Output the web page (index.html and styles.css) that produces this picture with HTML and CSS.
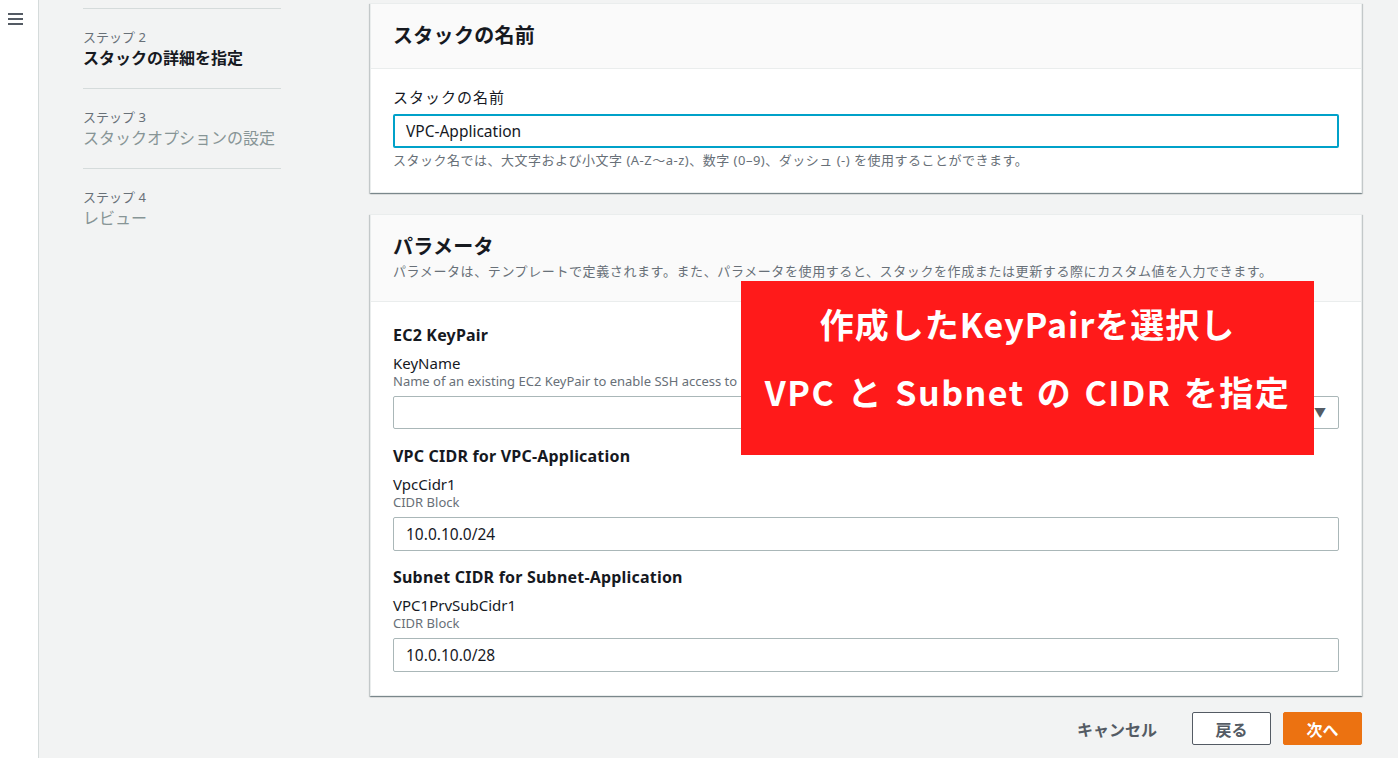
FILE: index.html
```html
<!DOCTYPE html>
<html lang="ja">
<head>
    <meta charset="UTF-8">
    <title>スタックの作成</title>
    <link rel="stylesheet" href="styles.css">
</head>
<body>
<div class="layout">
    <div class="side-bar">
        <svg class="menu-icon" width="16" height="14" viewBox="0 0 16 14"><rect x="0" y="1" width="15" height="2" fill="#545b64"/><rect x="0" y="6" width="15" height="2" fill="#545b64"/><rect x="0" y="11" width="15" height="2" fill="#545b64"/></svg>
    </div>
    <div class="main">
        <ul class="steps">
            <li><div class="step-no">ステップ 2</div><div class="step-name current">スタックの詳細を指定</div></li>
            <li><div class="step-no">ステップ 3</div><div class="step-name">スタックオプションの設定</div></li>
            <li><div class="step-no">ステップ 4</div><div class="step-name">レビュー</div></li>
        </ul>
        <div class="content">
            <div class="panel">
                <div class="panel-head">
                    <h2>スタックの名前</h2>
                </div>
                <div class="panel-body first">
                    <div class="label jp">スタックの名前</div>
                    <div class="input focus">VPC-Application</div>
                    <div class="hint">スタック名では、大文字および小文字 (A-Z～a-z)、数字 (0–9)、ダッシュ (-) を使用することができます。</div>
                </div>
            </div>
            <div class="panel params">
                <div class="panel-head tall">
                    <h2>パラメータ</h2>
                    <div class="desc">パラメータは、テンプレートで定義されます。また、パラメータを使用すると、スタックを作成または更新する際にカスタム値を入力できます。</div>
                </div>
                <div class="panel-body">
                    <h3>EC2 KeyPair</h3>
                    <div class="label">KeyName</div>
                    <div class="desc small">Name of an existing EC2 KeyPair to enable SSH access to</div>
                    <div class="input select"><span class="caret">&#9660;</span></div>
                    <h3>VPC CIDR for VPC-Application</h3>
                    <div class="label">VpcCidr1</div>
                    <div class="desc small">CIDR Block</div>
                    <div class="input">10.0.10.0/24</div>
                    <h3>Subnet CIDR for Subnet-Application</h3>
                    <div class="label">VPC1PrvSubCidr1</div>
                    <div class="desc small">CIDR Block</div>
                    <div class="input">10.0.10.0/28</div>
                </div>
                <div class="callout">
                    <p>作成したKeyPairを選択し</p>
                    <p class="wide">VPC と Subnet の CIDR を指定</p>
                </div>
            </div>
            <div class="actions">
                <span class="cancel">キャンセル</span>
                <button class="btn">戻る</button>
                <button class="btn primary">次へ</button>
            </div>
        </div>
    </div>
</div>
</body>
</html>
```
FILE: styles.css
```css
html, body { margin: 0; height: 100%; }
body { font-family: "Noto Sans", "Noto Sans CJK JP", sans-serif; color: #16191f; background: #f2f3f3; overflow: hidden; }
.layout { display: flex; height: 758px; }
.side-bar { width: 38px; background: #fff; border-right: 1px solid #d5dbdb; flex: none; }
.menu-icon { display: block; margin: 12px 0 0 8px; }
.main { flex: 1; display: flex; padding: 0 36px 0 44px; }

.steps { list-style: none; margin: 8px 0 0; padding: 0; width: 198px; flex: none; }
.steps li { border-top: 1px solid #d5dbdb; height: 80px; padding-top: 19px; box-sizing: border-box; }
.step-no { font-size: 13px; color: #687078; line-height: 18px; }
.step-name { font-size: 16px; color: #879596; line-height: 24px; }
.step-name.current { color: #16191f; font-weight: 700; }

.content { margin-left: 89px; flex: 1; padding-top: 3px; }
.panel { background: #fff; border: 1px solid #eaeded; box-shadow: 0 1px 1px 0 rgba(0,28,36,.3), 1px 1px 1px 0 rgba(0,28,36,.15), -1px 1px 1px 0 rgba(0,28,36,.15); position: relative; }
.panel-head { background: #fafafa; border-bottom: 1px solid #eaeded; height: 65px; box-sizing: border-box; padding: 18px 22px 0; }
.panel-head.tall { height: 87px; padding-top: 18px; }
.panel-head h2 { margin: 0; font-size: 20px; line-height: 28px; font-weight: 700; letter-spacing: 0.3px; }
.panel-head .desc { font-size: 13px; color: #687078; line-height: 20px; letter-spacing: 0.6px; }
.panel-body { padding: 22px 22px 23px; }
.panel-body.first { padding-top: 18px; padding-bottom: 24px; }
.panel-body h3 { margin: 0 0 7px; font-size: 16px; line-height: 22px; font-weight: 700; letter-spacing: 0.2px; }
.label { font-size: 15px; line-height: 20px; }
.label.jp { letter-spacing: 1px; }
.desc.small { font-size: 13px; color: #687078; line-height: 16px; }
.input { height: 34px; box-sizing: border-box; border: 1px solid #aab7b8; border-radius: 2px; padding: 0 12px; font-size: 15.5px; line-height: 32px; margin: 7px 0 15px; display: flex; }
.input.focus { border: 2px solid #00a1c9; line-height: 30px; margin: 7px 0 4px; padding: 0 11px; }
.input.select { justify-content: flex-end; height: 33px; line-height: 31px; margin-bottom: 16px; }
.caret { font-size: 12px; color: #545b64; }
.params { margin-top: 21px; }
.params .panel-body .input:last-child { margin-bottom: 0; }
.hint { font-size: 13px; color: #687078; line-height: 16px; letter-spacing: 0.5px; }

.callout { position: absolute; left: 370px; top: 66px; width: 573px; height: 174px; background: #ff1a1a; color: #fff; font-family: "Noto Sans CJK JP", sans-serif; font-weight: 700; font-size: 34px; letter-spacing: 1px; text-align: center; padding-top: 9px; box-sizing: border-box; }
.callout p { margin: 0; line-height: 68px; }
.callout p.wide { word-spacing: 3px; letter-spacing: 1.5px; }

.actions { display: flex; justify-content: flex-end; align-items: center; gap: 12px; margin-top: 16px; }
.cancel { font-size: 16px; font-weight: 700; color: #545b64; margin-right: 23px; }
.btn { width: 79px; height: 33px; border: 1px solid #545b64; background: #fff; border-radius: 2px; font-family: inherit; font-size: 16px; font-weight: 700; color: #545b64; }
.btn.primary { background: #ec7211; border-color: #ec7211; color: #fff; }
```
